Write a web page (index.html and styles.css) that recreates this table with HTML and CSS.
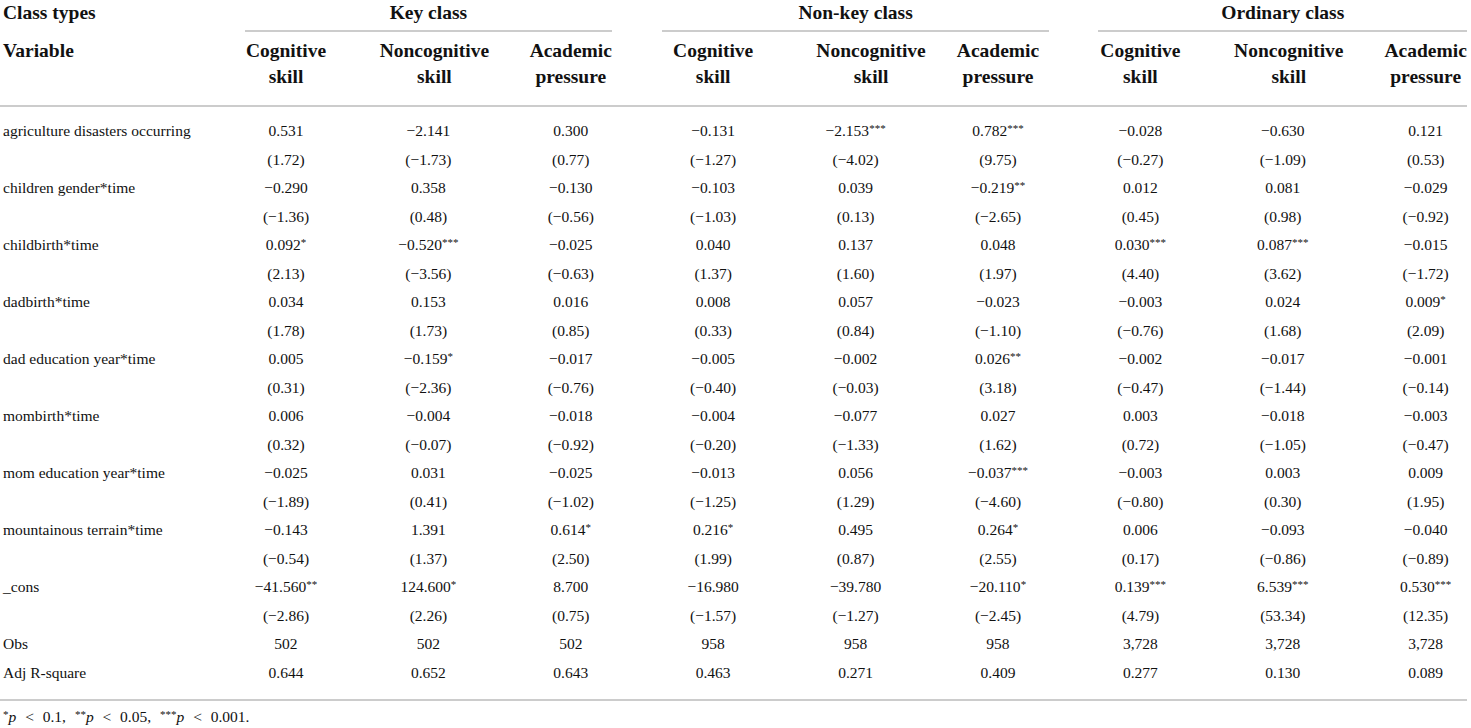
FILE: index.html
```html
<!DOCTYPE html>
<html lang="en">
<head>
    <meta charset="UTF-8">
    <meta name="viewport" content="width=device-width, initial-scale=1.0">
    <title>Class type regressions</title>
    <link rel="stylesheet" href="styles.css">
</head>
<body>
    <table class="results">
        <colgroup>
            <col class="col-label">
            <col class="col-num"><col class="col-num"><col class="col-num">
            <col class="col-num"><col class="col-num"><col class="col-num">
            <col class="col-num"><col class="col-num"><col class="col-last">
        </colgroup>
        <thead>
            <tr class="group-row">
                <th class="label">Class types</th>
                <th colspan="3" class="group-key"><div class="group-rule">Key class</div></th>
                <th colspan="3" class="group-nonkey"><div class="group-rule">Non-key class</div></th>
                <th colspan="3" class="group-ord"><div class="group-rule">Ordinary class</div></th>
            </tr>
            <tr class="sub-row">
                <th class="label">Variable</th>
                <th>Cognitive<br>skill</th>
                <th class="nudge">Noncognitive<br>skill</th>
                <th>Academic<br>pressure</th>
                <th>Cognitive<br>skill</th>
                <th class="nudge-wide">Noncognitive<br>skill</th>
                <th>Academic<br>pressure</th>
                <th>Cognitive<br>skill</th>
                <th class="nudge">Noncognitive<br>skill</th>
                <th>Academic<br>pressure</th>
            </tr>
        </thead>
        <tbody>
            <tr>
                <td class="label">agriculture disasters occurring</td>
                <td>0.531</td><td>−2.141</td><td>0.300</td>
                <td>−0.131</td><td>−2.153<span class="sig">***</span></td><td>0.782<span class="sig">***</span></td>
                <td>−0.028</td><td>−0.630</td><td>0.121</td>
            </tr>
            <tr>
                <td class="label"></td>
                <td>(1.72)</td><td>(−1.73)</td><td>(0.77)</td>
                <td>(−1.27)</td><td>(−4.02)</td><td>(9.75)</td>
                <td>(−0.27)</td><td>(−1.09)</td><td>(0.53)</td>
            </tr>
            <tr>
                <td class="label">children gender*time</td>
                <td>−0.290</td><td>0.358</td><td>−0.130</td>
                <td>−0.103</td><td>0.039</td><td>−0.219<span class="sig">**</span></td>
                <td>0.012</td><td>0.081</td><td>−0.029</td>
            </tr>
            <tr>
                <td class="label"></td>
                <td>(−1.36)</td><td>(0.48)</td><td>(−0.56)</td>
                <td>(−1.03)</td><td>(0.13)</td><td>(−2.65)</td>
                <td>(0.45)</td><td>(0.98)</td><td>(−0.92)</td>
            </tr>
            <tr>
                <td class="label">childbirth*time</td>
                <td>0.092<span class="sig">*</span></td><td>−0.520<span class="sig">***</span></td><td>−0.025</td>
                <td>0.040</td><td>0.137</td><td>0.048</td>
                <td>0.030<span class="sig">***</span></td><td>0.087<span class="sig">***</span></td><td>−0.015</td>
            </tr>
            <tr>
                <td class="label"></td>
                <td>(2.13)</td><td>(−3.56)</td><td>(−0.63)</td>
                <td>(1.37)</td><td>(1.60)</td><td>(1.97)</td>
                <td>(4.40)</td><td>(3.62)</td><td>(−1.72)</td>
            </tr>
            <tr>
                <td class="label">dadbirth*time</td>
                <td>0.034</td><td>0.153</td><td>0.016</td>
                <td>0.008</td><td>0.057</td><td>−0.023</td>
                <td>−0.003</td><td>0.024</td><td>0.009<span class="sig">*</span></td>
            </tr>
            <tr>
                <td class="label"></td>
                <td>(1.78)</td><td>(1.73)</td><td>(0.85)</td>
                <td>(0.33)</td><td>(0.84)</td><td>(−1.10)</td>
                <td>(−0.76)</td><td>(1.68)</td><td>(2.09)</td>
            </tr>
            <tr>
                <td class="label">dad education year*time</td>
                <td>0.005</td><td>−0.159<span class="sig">*</span></td><td>−0.017</td>
                <td>−0.005</td><td>−0.002</td><td>0.026<span class="sig">**</span></td>
                <td>−0.002</td><td>−0.017</td><td>−0.001</td>
            </tr>
            <tr>
                <td class="label"></td>
                <td>(0.31)</td><td>(−2.36)</td><td>(−0.76)</td>
                <td>(−0.40)</td><td>(−0.03)</td><td>(3.18)</td>
                <td>(−0.47)</td><td>(−1.44)</td><td>(−0.14)</td>
            </tr>
            <tr>
                <td class="label">mombirth*time</td>
                <td>0.006</td><td>−0.004</td><td>−0.018</td>
                <td>−0.004</td><td>−0.077</td><td>0.027</td>
                <td>0.003</td><td>−0.018</td><td>−0.003</td>
            </tr>
            <tr>
                <td class="label"></td>
                <td>(0.32)</td><td>(−0.07)</td><td>(−0.92)</td>
                <td>(−0.20)</td><td>(−1.33)</td><td>(1.62)</td>
                <td>(0.72)</td><td>(−1.05)</td><td>(−0.47)</td>
            </tr>
            <tr>
                <td class="label">mom education year*time</td>
                <td>−0.025</td><td>0.031</td><td>−0.025</td>
                <td>−0.013</td><td>0.056</td><td>−0.037<span class="sig">***</span></td>
                <td>−0.003</td><td>0.003</td><td>0.009</td>
            </tr>
            <tr>
                <td class="label"></td>
                <td>(−1.89)</td><td>(0.41)</td><td>(−1.02)</td>
                <td>(−1.25)</td><td>(1.29)</td><td>(−4.60)</td>
                <td>(−0.80)</td><td>(0.30)</td><td>(1.95)</td>
            </tr>
            <tr>
                <td class="label">mountainous terrain*time</td>
                <td>−0.143</td><td>1.391</td><td>0.614<span class="sig">*</span></td>
                <td>0.216<span class="sig">*</span></td><td>0.495</td><td>0.264<span class="sig">*</span></td>
                <td>0.006</td><td>−0.093</td><td>−0.040</td>
            </tr>
            <tr>
                <td class="label"></td>
                <td>(−0.54)</td><td>(1.37)</td><td>(2.50)</td>
                <td>(1.99)</td><td>(0.87)</td><td>(2.55)</td>
                <td>(0.17)</td><td>(−0.86)</td><td>(−0.89)</td>
            </tr>
            <tr>
                <td class="label">_cons</td>
                <td>−41.560<span class="sig">**</span></td><td>124.600<span class="sig">*</span></td><td>8.700</td>
                <td>−16.980</td><td>−39.780</td><td>−20.110<span class="sig">*</span></td>
                <td>0.139<span class="sig">***</span></td><td>6.539<span class="sig">***</span></td><td>0.530<span class="sig">***</span></td>
            </tr>
            <tr>
                <td class="label"></td>
                <td>(−2.86)</td><td>(2.26)</td><td>(0.75)</td>
                <td>(−1.57)</td><td>(−1.27)</td><td>(−2.45)</td>
                <td>(4.79)</td><td>(53.34)</td><td>(12.35)</td>
            </tr>
            <tr>
                <td class="label">Obs</td>
                <td>502</td><td>502</td><td>502</td>
                <td>958</td><td>958</td><td>958</td>
                <td>3,728</td><td>3,728</td><td>3,728</td>
            </tr>
            <tr>
                <td class="label">Adj R-square</td>
                <td>0.644</td><td>0.652</td><td>0.643</td>
                <td>0.463</td><td>0.271</td><td>0.409</td>
                <td>0.277</td><td>0.130</td><td>0.089</td>
            </tr>
        </tbody>
    </table>
    <p class="note"><span class="sig">*</span><i>p</i> &lt; 0.1, <span class="sig">**</span><i>p</i> &lt; 0.05, <span class="sig">***</span><i>p</i> &lt; 0.001.</p>
</body>
</html>
```

FILE: styles.css
```css
body {
    margin: 0;
    background-color: #fff;
    color: #111;
    font-family: "Liberation Serif", "Times New Roman", serif;
}

.results {
    width: 1467px;
    table-layout: fixed;
    border-collapse: separate;
    border-spacing: 0;
    font-size: 15.5px;
}

.col-label {
    width: 214.8px;
}

.col-num {
    width: 142.4px;
}

.col-last {
    width: 113.4px;
}

/* header rows */
.results th {
    font-size: 19.5px;
    font-weight: bold;
    line-height: 26px;
    padding: 0;
    text-align: center;
    vertical-align: top;
}

.results .label {
    text-align: left;
    padding-left: 3px;
}

.group-rule {
    padding-bottom: 4px;
    border-bottom: 2px solid #ccc;
}

.group-key .group-rule {
    margin: 0 30px 0 30px;
}

.group-nonkey .group-rule {
    margin: 0 20px 0 20px;
}

.group-ord .group-rule {
    margin: 0 0 0 29px;
}

.sub-row th {
    padding-top: 6px;
    padding-bottom: 15px;
    border-bottom: 2px solid #ccc;
}

.sub-row th.nudge {
    padding-left: 12px;
}

.sub-row th.nudge-wide {
    padding-left: 31px;
}

.sub-row th:last-child,
.results td:last-child {
    padding-left: 30px;
}

/* body rows */
.results td {
    line-height: 28.5px;
    padding: 0;
    text-align: center;
    white-space: nowrap;
}

.results tbody tr:first-child td {
    padding-top: 10px;
}

.results tbody tr:last-child td {
    padding-bottom: 12px;
    border-bottom: 2px solid #ccc;
}

.sig {
    font-size: 11px;
    line-height: 0;
    vertical-align: 4px;
}

.note {
    font-size: 15.5px;
    line-height: 20px;
    word-spacing: 5px;
    margin: 6px 0 0 3px;
}
```
